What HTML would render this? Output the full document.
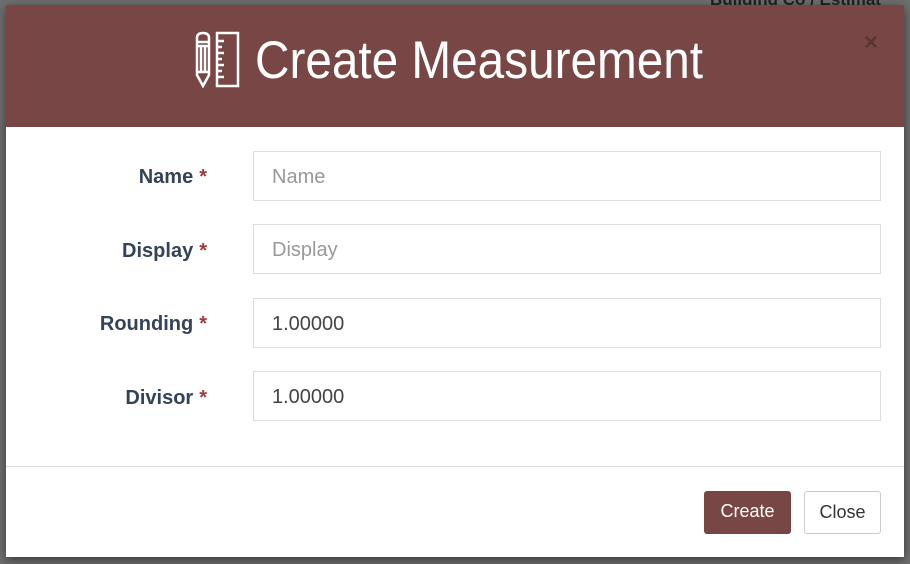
<!DOCTYPE html>
<html><head><style>
body{margin:0;width:910px;height:564px;background:#6f6f6f;position:relative;overflow:hidden;font-family:"Liberation Sans",sans-serif}
.bgtxt{position:absolute;left:710px;top:-10px;color:#222;font-size:17px;font-weight:bold}
.modal{position:absolute;left:6px;top:5px;width:898px;height:552px;background:#fff;box-shadow:0 3px 10px rgba(0,0,0,.5)}
.hdr{height:122px;background:#784644;position:relative}
.title{position:absolute;left:249px;top:26px;color:#fff;font-size:53px;white-space:nowrap;transform:scaleX(0.9);transform-origin:left top;line-height:60px}
.x{position:absolute;left:858px;top:24px;color:#5a3533;font-size:24px;font-weight:bold}
.lbl{position:absolute;right:697px;font-size:20px;font-weight:bold;color:#34425a}
.lbl span{color:#a33a35;margin-left:6px}
.inp{position:absolute;left:247px;width:628px;height:50px;border:1px solid #ddd;box-sizing:border-box;font-size:20px;padding-left:18px;line-height:50px;color:#444}
.ph{color:#999}
.ftr{position:absolute;left:0;top:461px;width:898px;border-top:1px solid #ddd}
.btn{position:absolute;top:486px;height:43px;box-sizing:border-box;border-radius:3px;font-size:18px;line-height:41px;text-align:center}
</style></head><body>
<div class="bgtxt">Building Co / Estimat</div>
<div class="modal">
<div class="hdr">
<svg style="position:absolute;left:188px;top:25px" width="48" height="58" viewBox="0 0 48 58" fill="none" stroke="#fff" stroke-width="2.5">
<path d="M3 8 Q3 3 9 3 Q15 3 15 8 V45 L9 56 L3 45 Z"/>
<path d="M3 12 H15 M3 16 H15 M7 17 V42 M11 17 V42 M3 42 H15"/>
<rect x="23" y="3" width="21" height="53"/>
<path d="M23 11 H30 M23 17 H28 M23 23 H30 M23 29 H28 M23 35 H30 M23 41 H28 M23 47 H30"/>
</svg>
<div class="title">Create Measurement</div>
<div class="x">×</div>
</div>
<div class="lbl" style="top:161px">Name<span>*</span></div>
<div class="inp ph" style="top:146px">Name</div>
<div class="lbl" style="top:235px">Display<span>*</span></div>
<div class="inp ph" style="top:219px">Display</div>
<div class="lbl" style="top:308px">Rounding<span>*</span></div>
<div class="inp" style="top:293px">1.00000</div>
<div class="lbl" style="top:382px">Divisor<span>*</span></div>
<div class="inp" style="top:366px">1.00000</div>
<div class="ftr"></div>
<div class="btn" style="left:698px;width:87px;background:#784644;color:#fff">Create</div>
<div class="btn" style="left:798px;width:77px;border:1px solid #ccc;color:#333">Close</div>
</div>
</body></html>
